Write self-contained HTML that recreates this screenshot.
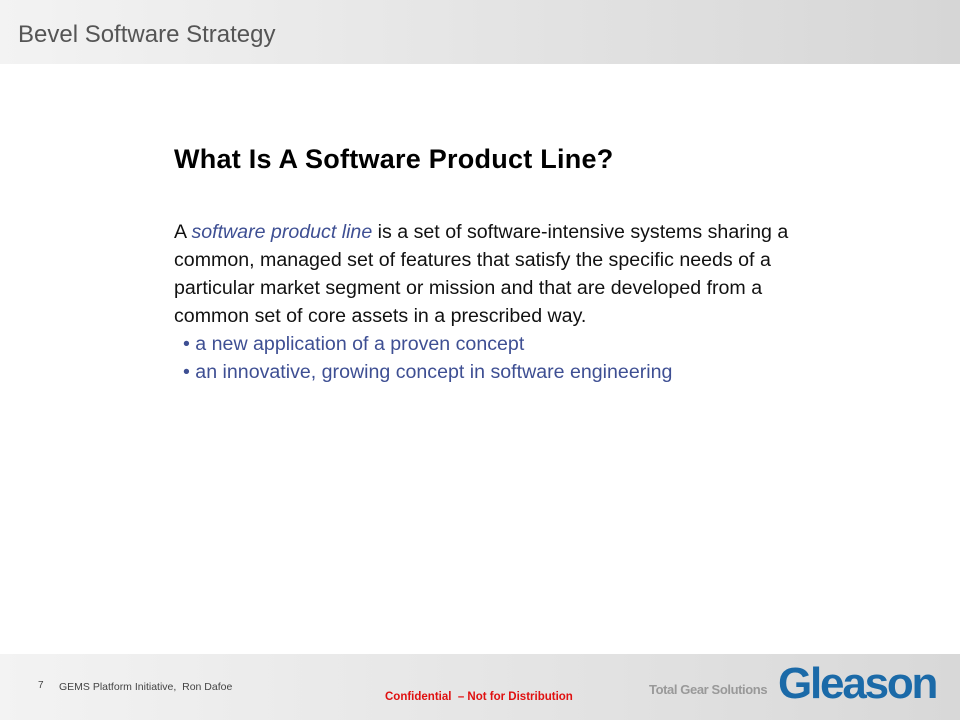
<!DOCTYPE html>
<html><head><style>
body{margin:0;width:960px;height:720px;position:relative;background:#fff;font-family:"Liberation Sans",Arial,sans-serif;overflow:hidden}
.hdr{position:absolute;left:0;top:0;width:960px;height:64px;background:linear-gradient(90deg,#f3f3f3,#d6d6d6)}
.hdr span{position:absolute;left:18px;top:21px;font-size:24px;color:#555}
.ftr{position:absolute;left:0;top:654px;width:960px;height:66px;background:linear-gradient(90deg,#f3f3f3,#d8d8d8)}
h1{position:absolute;left:174px;top:144px;margin:0;font-size:27px;letter-spacing:0.25px;font-weight:bold;color:#000}
.body{position:absolute;left:174px;top:218px;width:660px;font-size:19.6px;line-height:28px;color:#111}
.blue{color:#3e4f93}
ul{margin:0;padding:0;list-style:none}
li{color:#3e4f93;padding-left:9px}
</style></head><body>
<div class="hdr"><span>Bevel Software Strategy</span></div>
<h1>What Is A Software Product Line?</h1>
<div class="body">A <i class="blue">software product line</i> is a set of software-intensive systems sharing a<br>common, managed set of features that satisfy the specific needs of a<br>particular market segment or mission and that are developed from a<br>common set of core assets in a prescribed way.
<ul><li>•&nbsp;a new application of a proven concept</li><li>•&nbsp;an innovative, growing concept in software engineering</li></ul></div>
<div class="ftr">
<span style="position:absolute;left:38px;top:26px;font-size:10px;color:#444">7</span>
<span style="position:absolute;left:59px;top:27px;font-size:10.5px;color:#444">GEMS Platform Initiative,&nbsp; Ron Dafoe</span>
<span style="position:absolute;left:385px;top:37px;font-size:11.5px;color:#e01010;font-weight:bold">Confidential &nbsp;– Not for Distribution</span>
<span style="position:absolute;left:649px;top:28px;font-size:13px;color:#999;font-weight:bold;letter-spacing:-0.4px">Total Gear Solutions</span>
<span style="position:absolute;left:778px;top:5px;font-size:44px;color:#1b6aa8;font-weight:bold;letter-spacing:-2.2px">Gleason</span>
</div>
</body></html>
